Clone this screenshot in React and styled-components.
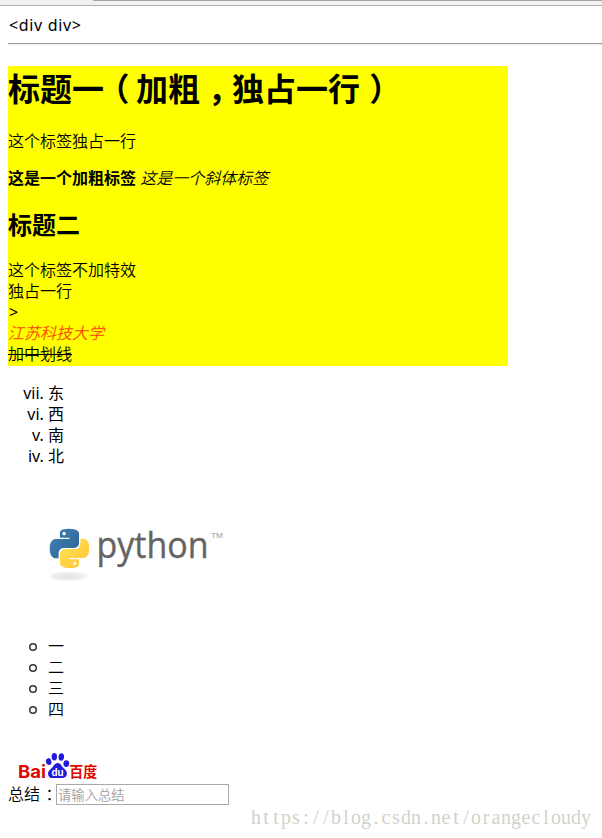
import React from 'react';
import styled, {createGlobalStyle} from 'styled-components';

const snake = "M14.25.18l.9.2.73.26.59.3.45.32.34.34.25.34.16.33.1.3.04.26.02.2-.01.13V8.5l-.05.63-.13.55-.21.46-.26.38-.3.31-.33.25-.35.19-.35.14-.33.1-.3.07-.26.04-.21.02H8.77l-.69.05-.59.14-.5.22-.41.27-.33.32-.27.35-.2.36-.15.37-.1.35-.07.32-.04.27-.02.21v3.06H3.17l-.21-.03-.28-.07-.32-.12-.35-.18-.36-.26-.36-.36-.35-.46-.32-.59-.28-.73-.21-.88-.14-1.05-.05-1.23.06-1.22.16-1.04.24-.87.32-.71.36-.57.4-.44.42-.33.42-.24.4-.16.36-.1.32-.05.24-.01h.16l.06.01h8.16v-.83H6.18l-.01-2.75-.02-.37.05-.34.11-.31.17-.28.25-.26.31-.23.38-.2.44-.18.51-.15.58-.12.64-.1.71-.06.77-.04.84-.02 1.27.05zm-6.3 1.98l-.23.33-.08.41.08.41.23.34.33.22.41.09.41-.09.33-.22.23-.34.08-.41-.08-.41-.23-.33-.33-.22-.41-.09-.41.09z";

const PythonLogo = () => (
  <Logo width="230" height="138" viewBox="8 482 230 138">
    <defs>
      <linearGradient id="blue" x1="0" y1="0" x2="1" y2="1">
        <stop offset="0" stopColor="#3d81ba"/>
        <stop offset="1" stopColor="#31628e"/>
      </linearGradient>
      <linearGradient id="yellow" x1="1" y1="1" x2="0" y2="0">
        <stop offset="0" stopColor="#ffe45c"/>
        <stop offset="1" stopColor="#ffc331"/>
      </linearGradient>
      <radialGradient id="shade">
        <stop offset="0" stopColor="#e2e2e2"/>
        <stop offset="1" stopColor="#f2f2f2"/>
      </radialGradient>
    </defs>
    <ellipse cx="68.5" cy="576.3" rx="18.5" ry="4.5" fill="url(#shade)"/>
    <g transform="translate(49.8 528.8) scale(1.64)">
      <path d={snake} fill="url(#blue)"/>
      <path d={snake} fill="url(#yellow)" transform="rotate(180 12 12)"/>
    </g>
    <text x="96.500" y="558" fontSize="37" fontWeight="400" fill="#646464" stroke="#646464" strokeWidth="0.4" fontFamily="'Open Sans', sans-serif" textLength="112" lengthAdjust="spacingAndGlyphs">python</text>
    <text x="211" y="538" fontSize="8" fontWeight="400" fill="#999" fontFamily="'Liberation Sans', sans-serif" textLength="12" lengthAdjust="spacingAndGlyphs">TM</text>
  </Logo>
)

const BaiduLogo = () => (
  <Logo width="100" height="48" viewBox="8 736 100 48">
    <g fill="#e10602" fontWeight="bold">
      <text x="18" y="777.7" fontSize="18" fontFamily="Inter, sans-serif" textLength="28" lengthAdjust="spacingAndGlyphs">Bai</text>
      <text x="69.3" y="776.8" fontSize="14.5" fontFamily="'Noto Sans CJK SC', sans-serif" textLength="28" lengthAdjust="spacingAndGlyphs">百度</text>
    </g>
    <g fill="#2319dc">
      <ellipse cx="48.7" cy="761.6" rx="2.7" ry="3.5" transform="rotate(-12 48.7 761.6)"/>
      <ellipse cx="54.3" cy="756.8" rx="2.7" ry="3.7"/>
      <ellipse cx="61.3" cy="757" rx="2.7" ry="3.7" transform="rotate(8 61.3 757)"/>
      <ellipse cx="66.3" cy="763.6" rx="2.9" ry="3.4"/>
      <path d="M57.5 763c2.6 0 3.6 2.2 5 4 1.800 2.200 4.700 3.600 4.400 7-.3 3-2.600 4.300-5 4.100-2.900-.2-5.800-.2-8.600 0-2.700.2-5.100-1.200-5.300-4.200-.2-3.100 2.700-4.500 4.500-6.700 1.500-1.900 2.400-4.200 5-4.200z"/>
    </g>
    <text x="51.5" y="775.6" fontSize="10" fontWeight="bold" fill="#fff" fontFamily="'Liberation Sans', sans-serif">du</text>
  </Logo>
)

const App = () => {
  return (
    <>
      <GlobalStyle/>
      <Toolbar><div className="edge"></div></Toolbar>
      <Page>
        <Tag $spacing="0.65px">&lt;div div&gt;</Tag>
        <hr/>
        <Yellow>
          <h1>标题一<Mark $left="0.3em">（</Mark>加粗<Mark $left="0.25em">，</Mark>独占一行<Mark $left="0.29em">）</Mark></h1>
          <p>这个标签独占一行</p>
          <b>这是一个加粗标签</b> <i>这是一个斜体标签</i>
          <h2>标题二</h2>
          <div>这个标签不加特效</div>
          <div>独占一行</div>
          <Tag>&gt;</Tag>
          <School>江苏科技大学</School>
          <div><del>加中划线</del></div>
        </Yellow>
        <ol reversed start="7">
          <li>东</li>
          <li>西</li>
          <li>南</li>
          <li>北</li>
        </ol>
        <PythonLogo/>
        <ul>
          <li>一</li>
          <li>二</li>
          <li>三</li>
          <li>四</li>
        </ul>
        <BaiduLogo/>
        <Summary>
          <label htmlFor="summary">总结<Mark $left="0.35em">：</Mark></label>
          <input id="summary" placeholder="请输入总结"/>
        </Summary>
      </Page>
      <Watermark>
        {'https://blog.csdn.net/orangecloudy'.split('').map((char, i) => (
          <span key={i}>{char}</span>
        ))}
      </Watermark>
    </>
  )
}

const GlobalStyle = createGlobalStyle`
  body {
    margin: 0;
    height: 838px;
    overflow: hidden;
    background: white;
    color: black;
    font-family: 'Noto Sans', 'Noto Sans CJK SC', sans-serif;
    font-size: 16px;
    font-weight: 350;
    line-height: 21px;
  }
  b {
    font-weight: 700;
  }
`
const Toolbar = styled.div`
  height: 5px;
  background: #f1f1f1;
  border-bottom: 1px solid #b2b2b2;
  .edge {
    height: 1px;
    margin-left: 93px;
    background: #a5a5a5;
  }
`
const Page = styled.div`
  padding: 9px 0 0 8px;
  hr {
    margin: 7px 0 21px;
    border: 0;
    border-top: 1px solid #9a9a9a;
    border-bottom: 1px solid #eeeeee;
  }
  ol, ul {
    margin: 16px 0;
    padding-left: 40px;
  }
  ol {
    margin: 17px 0 15px;
    list-style-type: lower-roman;
    font-weight: 400;
  }
  ul {
    list-style: none;
  }
  ul li {
    display: flex;
    margin-left: -19px;
  }
  ul li::before {
    content: '';
    width: 8px;
    height: 8px;
    margin: 7px 11px 0 0;
    border-radius: 50%;
    box-shadow: inset 0 0 0 1.5px #333;
  }
`
const Yellow = styled.div`
  box-sizing: border-box;
  width: 500px;
  height: 300px;
  padding-top: 1px;
  background: yellow;
  h1 {
    margin: 0 0 21.44px;
    font-size: 32px;
    line-height: 43px;
  }
  p {
    margin: 0 0 16px;
  }
  h2 {
    margin: 20px 0;
    font-size: 24px;
    line-height: 31px;
  }
`
// half width glyph, padded back to one em so it sits in the middle
const Mark = styled.span`
  display: inline-block;
  box-sizing: border-box;
  width: 1em;
  padding-left: ${props => props.$left};
  font-feature-settings: 'halt';
`
const Tag = styled.div`
  padding-left: 1px;
  font-weight: 400;
  letter-spacing: ${props => props.$spacing || 'normal'};
`
const School = styled.div`
  color: #ff4500;
  font-style: italic;
`
const Logo = styled.svg`
  display: block;
`
const Summary = styled.div`
  display: flex;
  input {
    box-sizing: border-box;
    width: 173px;
    height: 21px;
    padding: 1px;
    border: 1px solid #a9a9a9;
    font-family: 'Noto Sans CJK SC', sans-serif;
    font-size: 13.33px;
    font-weight: 350;
  }
  input::placeholder {
    color: #a0a0a0;
  }
`
const Watermark = styled.div`
  position: absolute;
  left: 251px;
  top: 807px;
  display: flex;
  color: #d2d2ca;
  font-family: 'Liberation Serif', serif;
  font-size: 20px;
  font-weight: 400;
  span {
    width: 10px;
    text-align: center;
  }
`

export default App
